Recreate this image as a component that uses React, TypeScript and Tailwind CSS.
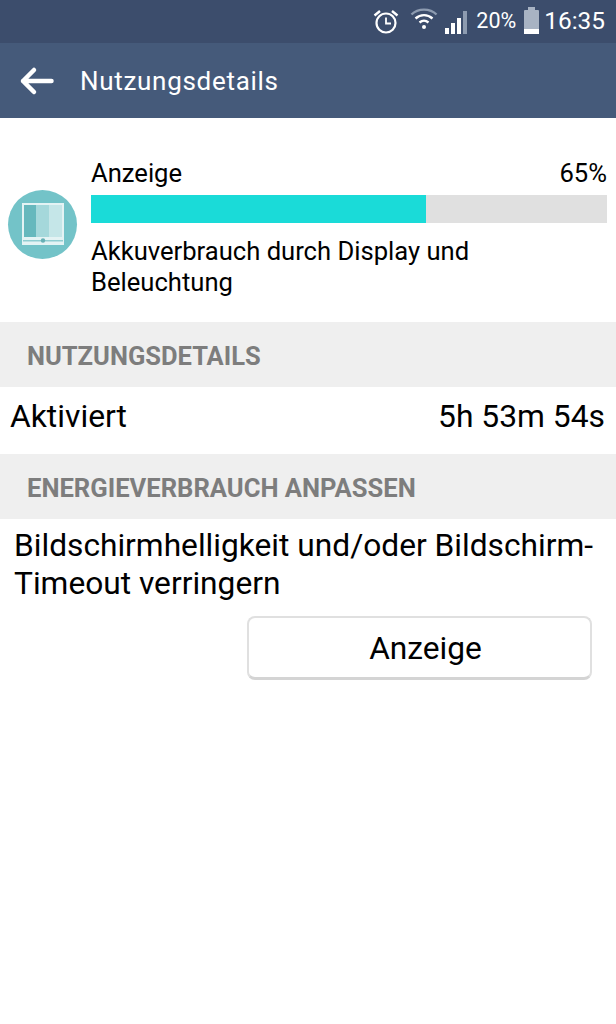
import React from "react";

const F = { fontFamily: "Roboto, sans-serif" };

function StatusIcons() {
  return (
    <>
      <svg width="30" height="30" viewBox="0 0 30 30" className="mr-[8px]" fill="none" stroke="#fff">
        <circle cx="15" cy="16" r="9.5" strokeWidth="2.2" />
        <path d="M15 10.5V16.5H20" strokeWidth="1.8" />
        <path d="M3.5 8.5L9 4M26.5 8.5L21 4" strokeWidth="2.4" />
      </svg>
      <svg width="30" height="24" viewBox="0 0 28 24" className="mr-[4px] mb-[5px]" fill="none">
        <path d="M1.5 7.5C8 1 20 1 26.5 7.5" stroke="#8d9bb0" strokeWidth="2.4" />
        <path d="M5.5 11.5C10.5 7 17.5 7 22.5 11.5" stroke="#fff" strokeWidth="2.4" />
        <path d="M9.5 15.5C12.5 13 15.5 13 18.5 15.5" stroke="#fff" strokeWidth="2.4" />
        <circle cx="14" cy="20" r="2" fill="#fff" />
      </svg>
      <svg width="28" height="26" viewBox="0 0 26 26" className="mr-[5px]">
        <rect x="1" y="19" width="4" height="6" fill="#fff" />
        <rect x="7" y="14" width="4" height="11" fill="#fff" />
        <rect x="13" y="9" width="4" height="16" fill="#fff" />
        <rect x="19" y="2" width="4" height="23" fill="#8d9bb0" />
      </svg>
    </>
  );
}

function DisplayIcon() {
  return (
    <div className="w-[69px] h-[69px] mt-[8px] rounded-full bg-[#73c3c8] shrink-0 flex items-center justify-center">
      <svg width="42" height="42" viewBox="0 0 42 42">
        <rect x="0" y="0" width="42" height="42" fill="#e4f3f4" />
        <rect x="2" y="2" width="12" height="32" fill="#66b8bd" />
        <rect x="14" y="2" width="13" height="32" fill="#a5d8db" />
        <rect x="27" y="2" width="13" height="32" fill="#c5e6e8" />
        <rect x="1" y="37" width="40" height="1.5" fill="#8fcdd1" />
        <circle cx="21" cy="37.5" r="2.2" fill="#66b0b5" />
      </svg>
    </div>
  );
}

export default function App() {
  return (
    <div className="w-[616px] h-[1024px] bg-white overflow-hidden text-black" style={F}>
      <div className="h-[43px] bg-[#3c4d6c] flex items-center justify-end pr-[11px] text-white text-[21.5px]">
        <StatusIcons />
        <span className="mr-[8px]">20%</span>
        <div className="relative w-[15px] h-[24px] mr-[5px] bg-[#a8b3c3] rounded-[1px]">
          <div className="absolute left-[4px] top-[-3px] w-[7px] h-[3px] bg-[#a8b3c3]" />
          <div className="absolute left-0 right-0 bottom-0 h-[5px] bg-white" />
        </div>
        <span className="text-[24.4px]">16:35</span>
      </div>

      <div className="h-[75px] bg-[#455a7a] flex items-center text-white">
        <svg width="36" height="30" viewBox="0 0 36 30" className="ml-[19px]" fill="none" stroke="#fff" strokeWidth="4.5" strokeLinecap="round" strokeLinejoin="round">
          <path d="M32.5 15H4M15 4L4 15L15 26" />
        </svg>
        <span className="ml-[25px] pt-[2px] text-[26px] tracking-[0.7px]">Nutzungsdetails</span>
      </div>

      <div className="h-[204px] flex items-center pl-[8px] pr-[9px]">
        <DisplayIcon />
        <div className="ml-[14px] flex-1 pt-[16px]">
          <div className="flex justify-between text-[25.6px] leading-[30px]">
            <span>Anzeige</span>
            <span>65%</span>
          </div>
          <div className="h-[28px] bg-[#e0e0e0] mt-[7px]">
            <div className="h-full w-[65%] bg-[#1adbd8]" />
          </div>
          <div className="mt-[13px] text-[25.6px] leading-[31px]">
            Akkuverbrauch durch Display und
            <br />
            Beleuchtung
          </div>
        </div>
      </div>

      <div className="h-[65px] bg-[#efefef] flex items-center pl-[27px] pt-[3px] text-[25.5px] font-bold text-[#7d7d7d]">NUTZUNGSDETAILS</div>

      <div className="h-[67px] flex items-center justify-between pl-[10px] pr-[11px] pb-[7px] text-[31.8px]">
        <span>Aktiviert</span>
        <span>5h 53m 54s</span>
      </div>

      <div className="h-[65px] bg-[#efefef] flex items-center pl-[27px] pt-[3px] text-[25.6px] font-bold text-[#7d7d7d]">ENERGIEVERBRAUCH ANPASSEN</div>

      <div className="pl-[14px] pr-[10px] pt-[8px] text-[31.7px] leading-[38px]">
        Bildschirmhelligkeit und/oder Bildschirm-
        <br />
        Timeout verringern
      </div>

      <div className="flex justify-end pr-[24px] mt-[13px]">
        <button className="w-[345px] h-[64px] pl-[12px] pt-[2px] bg-white border-2 border-[#e0e0e0] border-b-[3px] border-b-[#d4d4d4] rounded-[8px] text-[31.7px] flex items-center justify-center">
          Anzeige
        </button>
      </div>
    </div>
  );
}
